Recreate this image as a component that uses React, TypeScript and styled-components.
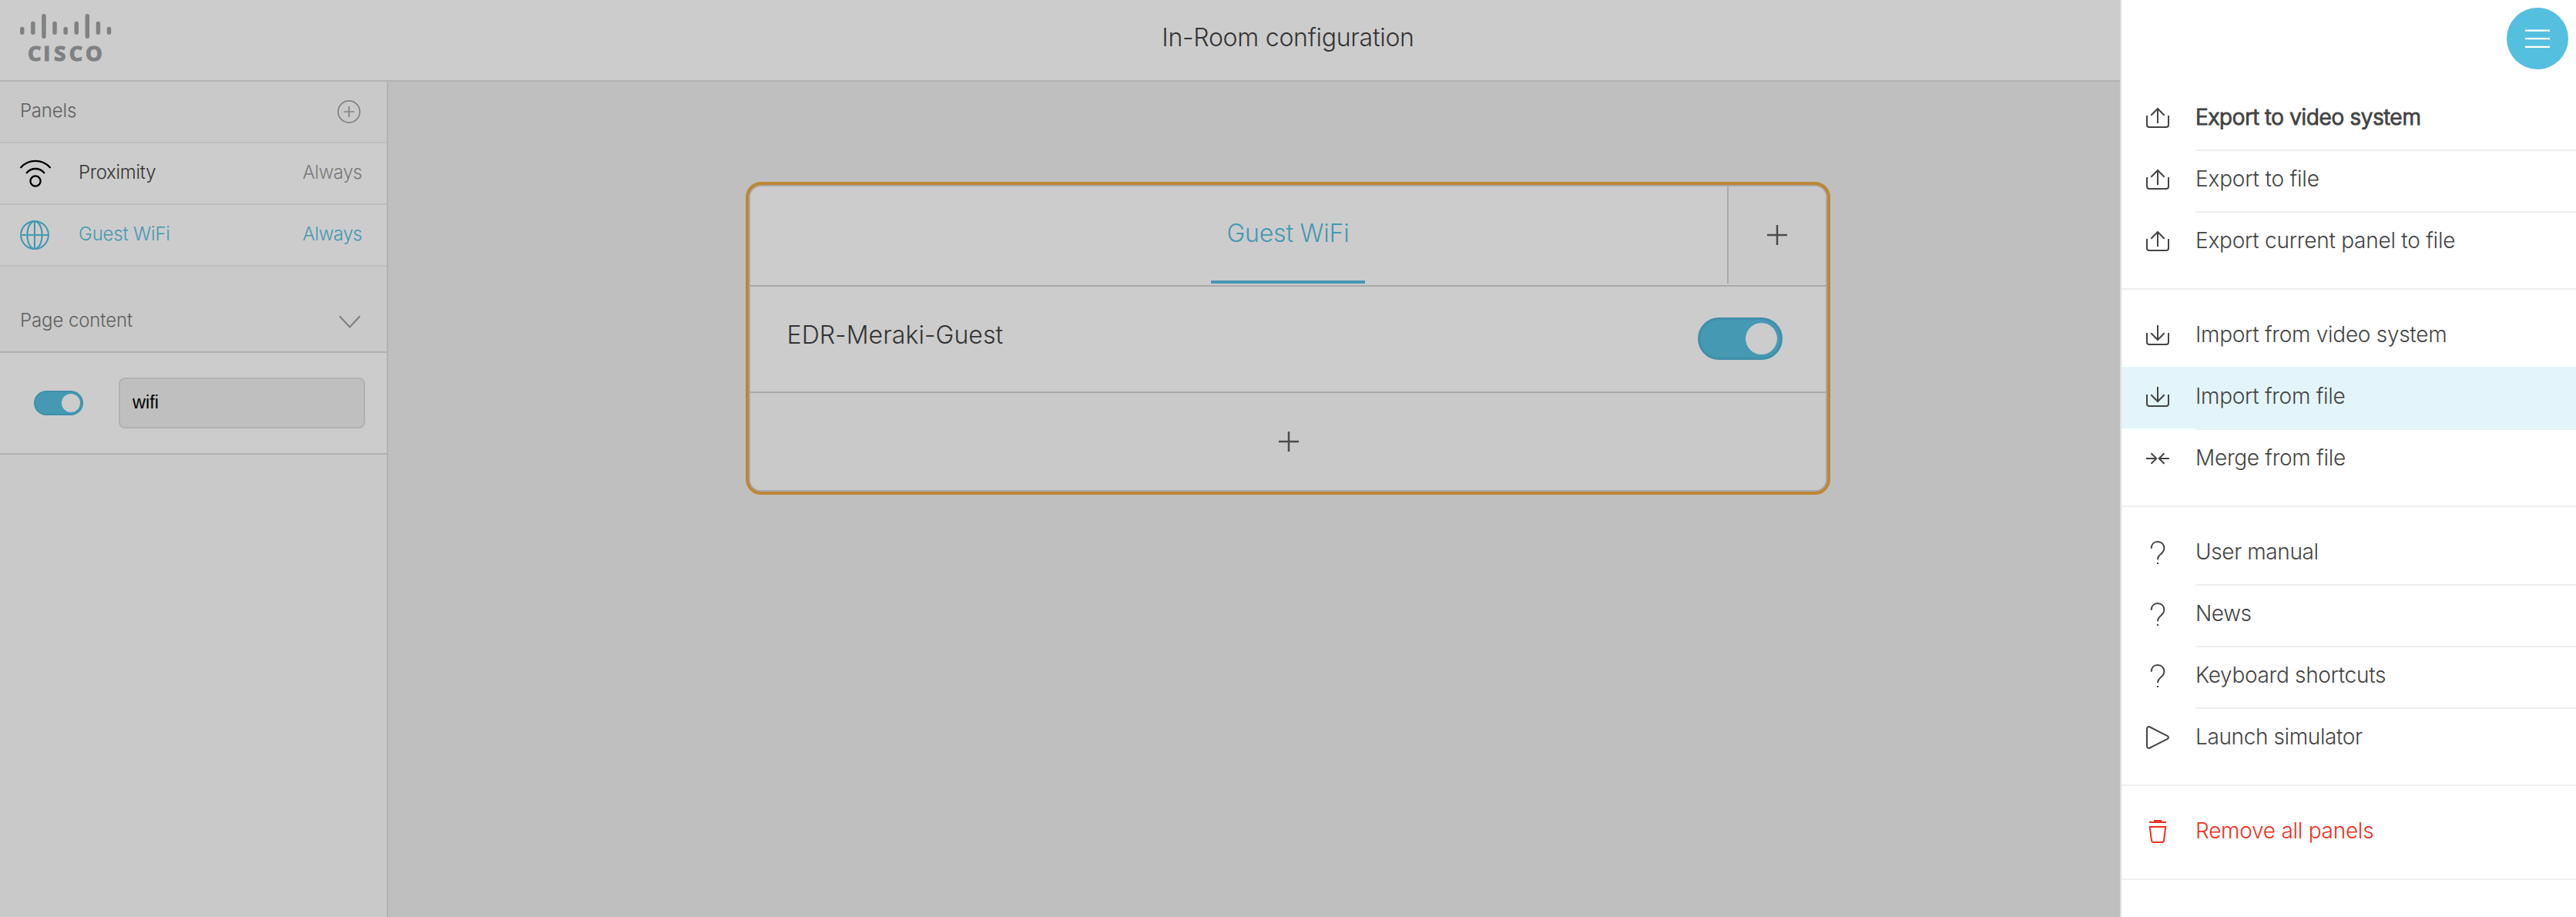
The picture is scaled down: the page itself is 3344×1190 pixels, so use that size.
import React from 'react';
import styled, { createGlobalStyle } from 'styled-components';

const color = {
  surface: '#cccccc',
  surfaceAlt: '#c9c9c9',
  canvas: '#bfbfbf',
  line: '#b2b2b2',
  lineSoft: '#bebebe',
  cardLine: '#a9a9a9',
  accent: '#be8635',
  blue: '#4599b2',
  blueDark: '#3f90aa',
  ink: '#343434',
  muted: '#606060',
  faint: '#7a7a7a',
  menuInk: '#444444',
  menuLine: '#efefef',
  danger: '#ef3124',
};

const GlobalStyle = createGlobalStyle`
  *, *::before, *::after { box-sizing: border-box; }
  body {
    margin: 0;
    background: ${color.canvas};
    font-family: Inter, 'Liberation Sans', sans-serif;
    font-weight: 300;
    overflow: hidden;
  }
  svg { display: block; flex: none; }
`;

const Page = styled.div`
  display: flex;
  flex-direction: column;
  height: 1190px;
  position: relative;
`;

const Text = styled.span<{ $spacing?: number }>`
  white-space: nowrap;
  letter-spacing: ${p => p.$spacing ?? 0}px;
`;

/* Header */

const Header = styled.header`
  display: grid;
  grid-template-columns: 1fr auto 1fr;
  height: 106px;
  flex: none;
  background: ${color.surface};
  border-bottom: 2px solid ${color.line};
`;

const LogoSlot = styled.div`
  padding: 18px 0 0 26px;
`;

const Title = styled.h1`
  margin: 0;
  padding-bottom: 7px;
  display: flex;
  align-items: center;
  font-size: 32px;
  font-weight: 300;
  color: ${color.ink};
`;

/* Sidebar */

const Body = styled.div`
  display: flex;
  flex: 1;
  min-height: 0;
`;

const Sidebar = styled.aside`
  width: 504px;
  flex: none;
  background: ${color.surfaceAlt};
  border-right: 2px solid ${color.line};
  font-size: 24px;
`;

const SectionHeader = styled.div<{ $height: number; $top?: number; $strong?: boolean }>`
  display: flex;
  align-items: center;
  justify-content: space-between;
  height: ${p => p.$height}px;
  padding: ${p => p.$top ?? 0}px 34px 0 26px;
  color: ${color.muted};
  border-bottom: 2px solid ${p => (p.$strong ? color.line : color.lineSoft)};

  ${Text} { padding-bottom: ${p => (p.$strong ? 6 : 3)}px; }
`;

const PanelRow = styled.div<{ $active?: boolean }>`
  display: grid;
  grid-template-columns: 76px 1fr auto;
  align-items: center;
  height: 80px;
  padding: 0 32px 0 26px;
  background: ${color.surface};
  border-bottom: 2px solid ${color.lineSoft};
  color: ${p => (p.$active ? color.blue : color.ink)};

  ${Text} { padding-bottom: 4px; }
  ${Text}:last-child { color: ${p => (p.$active ? color.blue : color.faint)}; }
`;

const WidgetRow = styled.div`
  display: flex;
  align-items: center;
  justify-content: space-between;
  height: 132px;
  padding: 0 28px 0 44px;
  background: ${color.surface};
  border-bottom: 2px solid ${color.line};
`;

const NameInput = styled.input`
  width: 320px;
  height: 66px;
  padding: 0 16px 1px;
  border: 2px solid ${color.line};
  border-radius: 8px;
  background: ${color.canvas};
  color: #000;
  font: 400 23.5px 'Liberation Sans', Arial, sans-serif;
  outline: none;
`;

const Toggle = styled.div<{ $w: number; $h: number; $knob: number; $border: number; $inset: number }>`
  display: flex;
  align-items: center;
  justify-content: flex-end;
  flex: none;
  width: ${p => p.$w}px;
  height: ${p => p.$h}px;
  padding-right: ${p => p.$inset}px;
  border: ${p => p.$border}px solid ${color.blueDark};
  border-radius: ${p => p.$h / 2}px;
  background: ${color.blue};

  &::after {
    content: '';
    width: ${p => p.$knob}px;
    height: ${p => p.$knob}px;
    border-radius: 50%;
    background: ${color.surface};
  }
`;

/* Canvas */

const Canvas = styled.main`
  flex: 1;
  padding: 130px 0 0 464px;
  background: ${color.canvas};
`;

const Selection = styled.section`
  width: 1408px;
  border: 4px solid ${color.accent};
  border-radius: 20px;
  background: ${color.accent};
`;

const Card = styled.div`
  border: 2px solid ${color.cardLine};
  border-radius: 16px;
  overflow: hidden;
  background: ${color.surface};
`;

const TabRow = styled.div`
  display: grid;
  grid-template-columns: 128px 1fr 128px;
  height: 130px;
  padding-bottom: 2px;
  border-bottom: 2px solid ${color.cardLine};
`;

const Tab = styled.div`
  grid-column: 2;
  justify-self: center;
  display: flex;
  align-items: center;
  justify-content: center;
  width: 200px;
  padding-bottom: 1px;
  border-bottom: 4px solid ${color.blue};
  font-size: 32px;
  color: ${color.blue};
`;

const AddTab = styled.div`
  display: flex;
  align-items: center;
  justify-content: center;
  border-left: 2px solid ${color.cardLine};
  background: ${color.surfaceAlt};
`;

const ControlRow = styled.div`
  display: flex;
  align-items: center;
  justify-content: space-between;
  height: 138px;
  padding: 0 56px 1px 47.5px;
  border-bottom: 2px solid ${color.cardLine};
  font-size: 32px;
  color: ${color.ink};

  ${Text} { padding-bottom: 10px; }
`;

const AddRow = styled.div`
  display: flex;
  align-items: center;
  justify-content: center;
  height: 126px;
  padding-left: 2px;
  background: ${color.surfaceAlt};
`;

/* Menu drawer */

const Drawer = styled.nav`
  position: absolute;
  top: 0;
  right: 0;
  bottom: 0;
  width: 592px;
  border-left: 2px solid #dedede;
  background: #fff;
  font-size: 28px;
`;

const DrawerHeader = styled.div`
  display: flex;
  justify-content: flex-end;
  height: 94px;
  padding: 10px 10px 0 0;
`;

const MenuButton = styled.button`
  display: flex;
  align-items: center;
  justify-content: center;
  width: 80px;
  height: 80px;
  padding: 0;
  border: 0;
  border-radius: 50%;
  background: #55bfe0;
`;

const MenuGroup = styled.div`
  padding: 20px 0;
  border-bottom: 2px solid ${color.menuLine};
`;

const MenuLabel = styled.div<{ $divided: boolean; $bold?: boolean }>`
  flex: 1;
  height: 80px;
  line-height: ${p => (p.$divided ? 72 : 76)}px;
  border-top: ${p => (p.$divided ? `2px solid ${color.menuLine}` : '0')};
  -webkit-text-stroke: ${p => (p.$bold ? '1.2px currentColor' : '0')};
`;

const MenuItem = styled.div<{ $hover?: boolean; $danger?: boolean }>`
  display: flex;
  height: 80px;
  padding-left: 31px;
  background: ${p => (p.$hover ? '#e3f5fa' : 'transparent')};
  color: ${p => (p.$danger ? color.danger : color.menuInk)};

  svg { margin: 24px 33px 0 0; }
`;

/* Icons */

const stroke = { fill: 'none', stroke: 'currentColor', strokeWidth: 2 } as const;

const LogoSvg = styled.svg`
  overflow: visible;
`;

const CiscoLogo = () => {
  const bars = [[16.7, 27], [9.7, 27], [0, 32], [9.7, 27], [16.7, 27], [9.7, 27], [0, 32], [9.7, 27], [16.7, 27]];
  return (
    <LogoSvg width="120" height="80" viewBox="0 0 120 80" fill="#7f8183">
      {bars.map(([top, bottom], i) => (
        <rect key={i} x={i * 14.1} y={top} width="5.5" height={bottom - top} rx="2.75" />
      ))}
      <text
        x="10 30.200 44.200 63.700 85"
        y="60.900"
        fontFamily="'Open Sans', 'Noto Sans', sans-serif"
        fontWeight="700"
        fontSize="27.400"
        stroke="#7f8183"
        strokeWidth="1.200"
      >
        CISCO
      </text>
    </LogoSvg>
  );
};

const AddCircleIcon = () => (
  <svg width="30" height="30" viewBox="0 0 30 30" fill="none" stroke="#838383" strokeWidth="1.7">
    <circle cx="15" cy="15" r="14.1" />
    <path d="M15 8v14M8 15h14" />
  </svg>
);

const ChevronIcon = () => (
  <svg width="28" height="18" viewBox="0 0 28 18" fill="none" stroke="#7d7d7d" strokeWidth="2">
    <path d="M.8 1.2 14 15.5 27.2 1.2" />
  </svg>
);

const ProximityIcon = () => (
  <svg width="40" height="38" viewBox="0 0 40 38" fill="none" stroke="#000" strokeWidth="2.3" strokeLinecap="round">
    <path d="M1.2 11.2C6 5.8 12.5 2.8 20 2.8s14 3 18.8 8.4" />
    <path d="M8.7 18.2C11.5 14.8 15.5 13 20 13s8.5 1.8 11.3 5.2" />
    <circle cx="20" cy="29" r="6.6" />
  </svg>
);

const GlobeIcon = () => (
  <svg width="38" height="38" viewBox="0 0 38 38" {...stroke} strokeWidth="2.1">
    <circle cx="19" cy="19" r="17.9" />
    <ellipse cx="19" cy="19" rx="9.6" ry="17.9" />
    <path d="M19 1v36M1 19h36" />
  </svg>
);

const PlusIcon = () => (
  <svg width="26" height="26" viewBox="0 0 26 26" fill="none" stroke="#4c4c4c" strokeWidth="2.5">
    <path d="M13 0v26M0 13h26" />
  </svg>
);

const HamburgerIcon = () => (
  <svg width="32" height="26" viewBox="0 0 32 26" stroke="#fff" strokeWidth="2.2">
    <path d="M0 2.6h32M0 13.2h32M0 23.9h32" />
  </svg>
);

const TRAY = 'M2 12v12a3 3 0 0 0 3 3h22a3 3 0 0 0 3-3V12';

const ExportIcon = () => (
  <svg width="32" height="32" viewBox="0 0 32 32" {...stroke}>
    <path d={TRAY} />
    <path d="M16 3v19M7.3 11.7 16 3l8.7 8.7" />
  </svg>
);

const ImportIcon = () => (
  <svg width="32" height="32" viewBox="0 0 32 32" {...stroke}>
    <path d={TRAY} />
    <path d="M16 2v19M7.3 12.3 16 21l8.7-8.7" />
  </svg>
);

const MergeIcon = () => (
  <svg width="32" height="32" viewBox="0 0 32 32" {...stroke}>
    <path d="M1 15h13.5M7.5 8.2l6.8 6.800-6.8 6.8" />
    <path d="M31 15H17.5M24.5 8.2 17.7 15l6.8 6.8" />
  </svg>
);

const HelpIcon = () => (
  <svg width="32" height="32" viewBox="0 0 32 32" {...stroke}>
    <path d="M7.7 9.8C7.7 4.500 11 1 16 1s8.400 3.600 8.400 8.200c0 3.600-1.700 5.400-4.400 7.800-2.800 2.400-4 3.600-4 7.300" />
    <path d="M16 28v2" />
  </svg>
);

const PlayIcon = () => (
  <svg width="32" height="32" viewBox="0 0 32 32" {...stroke}>
    <path d="M2 4c0-2.6 1.9-3.6 4-2.5l22.3 11.4c2.2 1.2 2.2 3 0 4.2L6 28.5c-2.1 1.1-4 .1-4-2.5z" />
  </svg>
);

const TrashIcon = () => (
  <svg width="32" height="32" viewBox="0 0 32 32" {...stroke}>
    <path d="M5 3h22M11 1h10" />
    <path d="M5.7 9h20.6l-2.3 17.5c-.2 1.6-1 2.5-2.6 2.5H10.6C9 29 8.2 28.1 8 26.5z" strokeLinejoin="round" />
  </svg>
);

interface Entry {
  label: string;
  icon: React.ComponentType;
  spacing: number;
  bold?: boolean;
  hover?: boolean;
  danger?: boolean;
}

const MENU: Entry[][] = [
  [
    { label: 'Export to video system', icon: ExportIcon, spacing: -0.21, bold: true },
    { label: 'Export to file', icon: ExportIcon, spacing: -0.18 },
    { label: 'Export current panel to file', icon: ExportIcon, spacing: -0.24 },
  ],
  [
    { label: 'Import from video system', icon: ImportIcon, spacing: -0.28 },
    { label: 'Import from file', icon: ImportIcon, spacing: -0.29, hover: true },
    { label: 'Merge from file', icon: MergeIcon, spacing: -0.28 },
  ],
  [
    { label: 'User manual', icon: HelpIcon, spacing: -0.38 },
    { label: 'News', icon: HelpIcon, spacing: -0.4 },
    { label: 'Keyboard shortcuts', icon: HelpIcon, spacing: -0.31 },
    { label: 'Launch simulator', icon: PlayIcon, spacing: -0.38 },
  ],
  [{ label: 'Remove all panels', icon: TrashIcon, spacing: -0.26, danger: true }],
];

export default function App() {
  return (
    <>
      <GlobalStyle />
      <Page>
        <Header>
          <LogoSlot><CiscoLogo /></LogoSlot>
          <Title><Text $spacing={-0.25}>In-Room configuration</Text></Title>
        </Header>

        <Body>
          <Sidebar>
            <SectionHeader $height={80}>
              <Text $spacing={-0.2}>Panels</Text>
              <AddCircleIcon />
            </SectionHeader>
            <PanelRow>
              <ProximityIcon />
              <Text $spacing={-0.3}>Proximity</Text>
              <Text $spacing={-0.45}>Always</Text>
            </PanelRow>
            <PanelRow $active>
              <GlobeIcon />
              <Text $spacing={-0.2}>Guest WiFi</Text>
              <Text $spacing={-0.45}>Always</Text>
            </PanelRow>
            <SectionHeader $height={112} $top={34} $strong>
              <Text $spacing={-0.1}>Page content</Text>
              <ChevronIcon />
            </SectionHeader>
            <WidgetRow>
              <Toggle $w={64} $h={32} $knob={24} $border={2} $inset={2} />
              <NameInput defaultValue="wifi" />
            </WidgetRow>
          </Sidebar>

          <Canvas>
            <Selection>
              <Card>
                <TabRow>
                  <Tab><Text $spacing={-0.2}>Guest WiFi</Text></Tab>
                  <AddTab><PlusIcon /></AddTab>
                </TabRow>
                <ControlRow>
                  <Text $spacing={0.08}>EDR-Meraki-Guest</Text>
                  <Toggle $w={110} $h={55} $knob={41.4} $border={3.4} $inset={3.6} />
                </ControlRow>
                <AddRow><PlusIcon /></AddRow>
              </Card>
            </Selection>
          </Canvas>
        </Body>

        <Drawer>
          <DrawerHeader>
            <MenuButton aria-label="Menu"><HamburgerIcon /></MenuButton>
          </DrawerHeader>
          {MENU.map((group, g) => (
            <MenuGroup key={g}>
              {group.map(({ label, icon: Icon, spacing, bold, hover, danger }, i) => (
                <MenuItem key={label} $hover={hover} $danger={danger}>
                  <Icon />
                  <MenuLabel $divided={i > 0 && !hover} $bold={bold}>
                    <Text $spacing={spacing}>{label}</Text>
                  </MenuLabel>
                </MenuItem>
              ))}
            </MenuGroup>
          ))}
        </Drawer>
      </Page>
    </>
  );
}
